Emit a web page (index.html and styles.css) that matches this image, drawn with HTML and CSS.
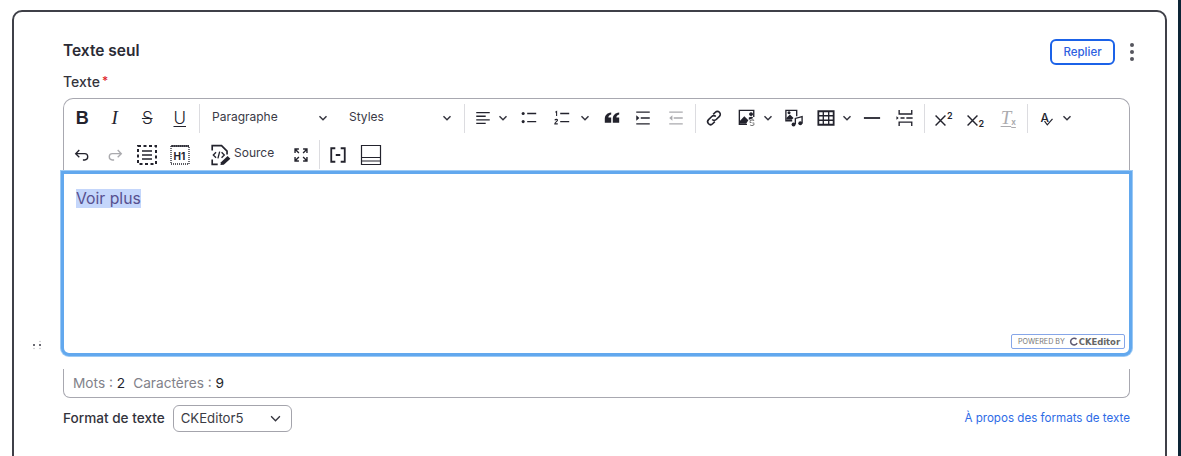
FILE: index.html
```html
<!DOCTYPE html>
<html lang="fr">
<head>
<meta charset="utf-8">
<title>Texte seul</title>
<link rel="stylesheet" href="styles.css">
</head>
<body>
<div class="page">
<main class="card">
  <span class="drag" aria-hidden="true">
    <svg width="12" height="12" viewBox="0 0 12 12"><g fill="#3a3a44"><circle cx="3" cy="6" r="1"/><circle cx="9" cy="6" r="1"/></g><g fill="#c4c4c8"><circle cx="9" cy="2.500" r=".8"/><circle cx="3" cy="9.500" r=".8"/><circle cx="9" cy="9.500" r=".8"/></g></svg>
  </span>
  <header class="head">
    <h2 class="title">Texte seul</h2>
    <div class="actions">
      <button class="collapse">Replier</button>
      <span class="kebab"><i></i><i></i><i></i></span>
    </div>
  </header>
  <label class="label">Texte<span class="req">*</span></label>
  <div class="editor">
    <div class="toolbar">
      <div class="row row1">
        <span class="btn t-b">B</span>
        <span class="btn t-i">I</span>
        <span class="btn t-s">S</span>
        <span class="btn t-u">U</span>
        <span class="sep s1"></span>
        <span class="drop d1"><span class="drop-text">Paragraphe</span><svg class="chev" viewBox="0 0 10 10"><path d="M1.500 3.200 5 6.800l3.500-3.600"/></svg></span>
        <span class="drop d2"><span class="drop-text">Styles</span><svg class="chev" viewBox="0 0 10 10"><path d="M1.500 3.200 5 6.800l3.500-3.600"/></svg></span>
        <span class="sep s2"></span>
        <span class="btn split"><svg class="ico" viewBox="0 0 20 20"><path class="ln" d="M2.500 4h15M2.500 8h10.500M2.500 12h15M2.500 16h10.500"/></svg></span>
        <span class="arrow a1"><svg class="chev" viewBox="0 0 10 10"><path d="M1.500 3.200 5 6.800l3.500-3.600"/></svg></span>
        <span class="btn"><svg class="ico" viewBox="0 0 20 20"><circle cx="3.500" cy="5" r="1.700"/><circle cx="3.500" cy="14" r="1.700"/><path class="ln" d="M8 5h10M8 14h10"/></svg></span>
        <span class="btn split"><svg class="ico" viewBox="0 0 20 20"><path class="ln thin" d="M2.700 3.500 4 2.800v5M2 12.500c.6-1.300 3-1.300 3 0 0 1-3 2.300-3 4h3.300"/><path class="ln" d="M8 5h10M8 14h10"/></svg></span>
        <span class="arrow"><svg class="chev" viewBox="0 0 10 10"><path d="M1.500 3.200 5 6.800l3.500-3.600"/></svg></span>
        <span class="btn b-quote"><svg class="ico quote" viewBox="0 0 20 20"><path d="M1 16h8v-6.500H5.500c0-2 1-3.300 3.500-4V3C3.500 3.500 1 7 1 11zM11 16h8v-6.500h-3.500c0-2 1-3.300 3.500-4V3c-5.500.5-8 4-8 8z"/></svg></span>
        <span class="btn"><svg class="ico" viewBox="0 0 20 20"><path class="ln" d="M2.500 3.500h15M7.500 10h10M2.500 16.500h15"/><path d="M2.500 7v6l3.500-3z"/></svg></span>
        <span class="btn off"><svg class="ico" viewBox="0 0 20 20"><path class="ln" d="M2.500 3.500h15M7.500 10h10M2.500 16.500h15"/><path d="M6 7v6l-3.500-3z"/></svg></span>
        <span class="sep s3"></span>
        <span class="btn"><svg class="ico link" viewBox="0 0 20 20"><path class="ln ln2" d="m9 5.500 2.700-2.700a3.600 3.600 0 0 1 5.100 5.100l-4 4a3.600 3.600 0 0 1-5.100 0M11 14.500l-2.700 2.700a3.600 3.600 0 0 1-5.100-5.100l4-4a3.600 3.600 0 0 1 5.100 0"/></svg></span>
        <span class="btn split"><svg class="ico" viewBox="0 0 20 20"><path class="ln" d="M10 17H1.500V1.500h16V9"/><path d="M1.500 16.500V14l5.500-6 4.500 4.500-2.500 4zM14.500 3.500a2.200 2.200 0 1 1-.01 0zM12 9.500c2-1.200 4-1.200 5 .5l-3 1.500-2 .5z"/><path class="ln thin gray" d="M17.800 13c-1.200-1.500-4.700-1-4.400 1.300M13.500 17.500c1.200 1.500 4.700 1 4.400-1.300M13 15h2M16 15.500h2"/></svg></span>
        <span class="arrow a2"><svg class="chev" viewBox="0 0 10 10"><path d="M1.500 3.200 5 6.800l3.500-3.600"/></svg></span>
        <span class="btn"><svg class="ico" viewBox="0 0 20 20"><path class="ln" d="M8 13H1V1.500h12V8"/><path d="M1.500 12V10l4-4 4 4-2 2zM4.500 2.500a1.700 1.700 0 1 1-.01 0z"/><path class="ln" d="M11.500 17V10.500l7.500-2V16"/><circle cx="9.500" cy="17.300" r="2.200"/><circle cx="17" cy="15.800" r="2.200"/></svg></span>
        <span class="btn split"><svg class="ico" viewBox="0 0 20 20"><path class="ln ln2" d="M1.500 2.500h17v15h-17z"/><path class="ln" d="M1.500 7.500h17M1.500 12.500h17M7 2.500v15M13 2.500v15"/></svg></span>
        <span class="arrow a3"><svg class="chev" viewBox="0 0 10 10"><path d="M1.500 3.200 5 6.800l3.500-3.600"/></svg></span>
        <span class="btn b-hr"><svg class="ico" viewBox="0 0 20 20"><path class="ln ln2" d="M1 10h18"/></svg></span>
        <span class="btn"><svg class="ico" viewBox="0 0 20 20"><path class="ln" d="M3.500 1v4.500h14V1M3.500 19v-4.500h14V19M5 10h4.500M11.500 10h7"/><path d="M.5 8v4L3 10z"/></svg></span>
        <span class="sep s4"></span>
        <span class="btn t-x"><svg class="ico" viewBox="0 0 20 20"><path class="ln x-ln" d="m1 1 18 18M19 1 1 19"/></svg><sup>2</sup></span>
        <span class="btn t-x t-sub"><svg class="ico" viewBox="0 0 20 20"><path class="ln x-ln" d="m1 1 18 18M19 1 1 19"/></svg><sub>2</sub></span>
        <span class="btn t-t off">T<small>x</small></span>
        <span class="sep s5"></span>
        <span class="btn t-a">A<svg class="tick" viewBox="0 0 12 10"><path class="ln" d="m1 4 3.500 4.500L11 1"/></svg></span>
        <span class="arrow a4"><svg class="chev" viewBox="0 0 10 10"><path d="M1.500 3.200 5 6.800l3.500-3.600"/></svg></span>
      </div>
      <div class="row row2">
        <span class="btn"><svg class="ico" viewBox="0 0 20 20"><path class="ln" d="M7 4.500 3 8.500l4 4M3 8.500h10c4.500 0 4.500 7 0 7h-2"/></svg></span>
        <span class="btn off"><svg class="ico" viewBox="0 0 20 20"><path class="ln" d="m13 4.500 4 4-4 4M17 8.500H7c-4.500 0-4.500 7 0 7h2"/></svg></span>
        <span class="btn"><svg class="ico big" viewBox="0 0 20 20"><path class="ln dash" d="M1 1h18v18H1z"/><path class="ln" d="M5 6h10M5 10h10M5 14h10"/></svg></span>
        <span class="btn"><svg class="ico big" viewBox="0 0 20 20"><path class="ln dotb" d="M1 1v18h18V1z"/><path class="ln" d="M1 1h18"/><text class="h1" x="9.500" y="14.500">H1</text></svg></span>
        <span class="source"><svg class="ico src" viewBox="0 0 20 20"><path class="ln" d="M2 6V1.500h8.500l5 5v3M2 14v4.500h5"/><path class="ln thin" d="M5.500 7.500 3 10l2.500 2.500M10.500 7.500 13 10l-2.500 2.500M8.800 7l-1.600 6"/><path d="m9.500 19 .5-2.500 6-5.500 2.500 2.300-6 5.500z"/></svg><span>Source</span></span>
        <span class="btn b-exp"><svg class="ico sm" viewBox="0 0 20 20"><path class="ln ln2" d="M1.500 7V1.500H7M13 1.500h5.500V7M1.500 13v5.500H7M18.500 13v5.500H13M2 2l5 5M18 2l-5 5M2 18l5-5M18 18l-5-5"/></svg></span>
        <span class="sep s6"></span>
        <span class="btn"><svg class="ico" viewBox="0 0 20 20"><path class="ln ln2" d="M7 2.500H2.500v15H7M13 2.500h4.500v15H13M7.500 10h5"/></svg></span>
        <span class="btn"><svg class="ico big" viewBox="0 0 20 20"><path class="ln thin" d="M.5 .5h19v19H.5zM.5 12.500h19M.5 16h19"/></svg></span>
      </div>
    </div>
    <div class="content">
      <p class="para"><span class="sel">Voir plus</span></p>
      <div class="powered">POWERED BY <svg viewBox="0 0 12 12"><path d="M10 3a4.500 4.500 0 1 0 .8 5"/></svg><b>CKEditor</b></div>
    </div>
    <div class="status">Mots : <em>2</em><span class="chars">Caractères : <em>9</em></span></div>
  </div>
  <div class="format">
    <span class="format-label">Format de texte</span>
    <span class="select">CKEditor5<svg class="chev" viewBox="0 0 10 10"><path d="M1 3 5 7l4-4"/></svg></span>
    <a class="about" href="#">À propos des formats de texte</a>
  </div>
</main>
<aside class="strip"></aside>
</div>
</body>
</html>
```

FILE: styles.css
```css
* { box-sizing: border-box; }
html, body { margin: 0; height: 100%; overflow: hidden; background: #fff; }
body { font-family: Inter, "Liberation Sans", sans-serif; color: #2f2f38; }
.page { display: flex; height: 456px; padding-left: 12px; }
.card {
  position: relative;
  width: 1155px;
  height: 470px;
  margin-top: 10px;
  margin-right: 11px;
  padding: 25px 35px 0 49px;
  border: 2px solid #3f4048;
  border-radius: 10px;
}
.strip { width: 3px; height: 456px; background: #0d2536; }
.drag { position: absolute; left: 17px; top: 327px; width: 12px; height: 12px; }
.drag svg { display: block; }
.head { display: flex; align-items: center; justify-content: space-between; height: 28px; }
.title { margin: 0; font-size: 15.500px; line-height: 26px; font-weight: 600; color: #2b2b35; }
.actions { display: flex; align-items: center; margin: 2px -5px 0 0; }
.collapse {
  width: 65px; height: 26px; padding: 0;
  font: 500 11.500px Inter, sans-serif; color: #2d5fe0;
  background: #fff; border: 2px solid #1b62e8; border-radius: 6px;
}
.kebab { display: flex; flex-direction: column; gap: 3px; margin-left: 15px; width: 5px; }
.kebab i { width: 4px; height: 4px; border-radius: 50%; background: #55565e; }
.label { display: block; margin-top: 6px; height: 27px; font-size: 14px; line-height: 20px; font-weight: 500; color: #33333c; }
.req { margin-left: 2px; color: #e0262b; font-size: 12px; vertical-align: 2px; }
.editor { width: 1067px; }
.toolbar { height: 73px; padding: 0 0 0 2px; border: 1px solid #a8a8b0; border-bottom: 0; border-radius: 10px 10px 0 0; }
.row { display: flex; align-items: center; }
.row1 { height: 37px; padding-top: 1px; }
.row2 { height: 35px; padding-top: 2px; }
.btn { display: flex; flex: none; align-items: center; justify-content: center; width: 32.500px; height: 28px; color: #23232d; }
.off { opacity: .38; }
.ico { display: block; width: 18px; height: 18px; fill: #23232d; overflow: visible; }
.ico.big { width: 20px; height: 20px; }
.ico.sm { width: 14px; height: 14px; }
.ico.src { width: 22px; height: 22px; }
.ico.quote { width: 16px; height: 16px; margin-left: 2px; }
.ico.link { width: 16px; height: 16px; }
.ln { fill: none; stroke: #23232d; stroke-width: 1.500; }
.ln2 { stroke-width: 2; }
.thin { stroke-width: 1.200; }
.gray { stroke: #777; }
.x-ln { stroke-width: 2.600; }
.dash { stroke-dasharray: 3 2.500; stroke-width: 2; }
.dotb { stroke-dasharray: 1 1; stroke-width: 1.300; }
.h1 { font: 700 10px Inter, sans-serif; fill: #23232d; text-anchor: middle; }
.sep { flex: none; width: 1px; height: 29px; margin: 0 2px; background: #dcdce0; }
.s1 { margin-left: 3px; }
.s2, .s3, .s4, .s5 { margin: 0 2.500px; }
.t-b { font: 700 18px "Liberation Sans", sans-serif; }
.t-i { font: italic 400 19px "Liberation Serif", serif; }
.t-s { font: 300 17px Inter, sans-serif; text-decoration: line-through; text-decoration-thickness: 1.300px; }
.t-u { font: 300 17px Inter, sans-serif; text-decoration: underline; text-decoration-thickness: 1.300px; text-underline-offset: 2px; }
.drop { display: flex; flex: none; align-items: center; justify-content: space-between; height: 28px; font-size: 12px; color: #3a3a46; }
.drop-text { margin-top: -3px; }
.d1 { width: 135px; padding: 0 9.500px 0 10px; }
.d2 { width: 124px; padding: 0 9.500px 0 12px; }
.chev { display: block; flex: none; width: 10px; height: 10px; fill: none; stroke: #33333d; stroke-width: 1.400; }
.split { width: 32px; }
.arrow { display: flex; flex: none; align-items: center; justify-content: center; width: 14px; }
.a1 { margin: 0 3px 0 -3px; }
.a2 { width: 16px; margin: 0 2px 0 -3px; }
.a3 { width: 16px; margin-left: -3px; }
.a4 { width: 14px; margin-left: -3px; }
.b-quote { margin-left: 3px; }
.b-hr { margin-left: 1px; }
.t-x { position: relative; }
.t-x sup, .t-x sub { font-size: 9px; font-weight: 600; line-height: 1; color: #23232d; position: absolute; }
.t-x .ico { width: 11px; height: 11px; margin: 4px 6px 0 0; }
.t-x sup { right: 7px; top: 7px; }
.t-x sub { right: 8px; bottom: 4px; }
.t-t { font: italic 400 19px "Liberation Serif", serif; text-decoration: underline; text-decoration-thickness: 1px; text-underline-offset: 2px; }
.t-t small { font: 700 8px Inter, sans-serif; margin-top: 8px; }
.t-a { position: relative; font: 500 12px Inter, sans-serif; align-items: flex-start; padding-right: 4px; padding-top: 6px; }
.tick { position: absolute; left: 12px; top: 14px; width: 11px; height: 8px; }
.source { display: flex; flex: none; align-items: center; width: 90px; padding-left: 14px; gap: 2px; font-size: 12px; color: #3a3a46; margin-top: -2px; }
.source .ico { margin-top: 2px; }
.source span { margin-top: -3px; }
.b-exp { margin-left: -1px; width: 32px; }
.content {
  position: relative;
  width: 1071px; height: 185px;
  margin: 0 -2px;
  padding: 15px 12px 0;
  border: 3px solid #62a8ee;
  border-radius: 0 0 8px 8px;
  background: #fff;
  box-shadow: 0 0 0 1px #9ccaf5;
}
.para { margin: 0; font-size: 15.750px; line-height: 20px; color: #57508f; }
.sel { display: inline-block; background: #c4d6fb; line-height: 19px; }
.powered {
  position: absolute; right: 4px; bottom: 4px;
  display: flex; align-items: center;
  width: 114px; height: 15px; padding-left: 6px;
  font-size: 7.200px; color: #777; letter-spacing: -.05px; white-space: pre;
  border: 1px solid #86a6e8; border-radius: 2px; background: #fff;
}
.powered svg { width: 9px; height: 9px; margin-left: 2px; fill: none; stroke: #5f5a72; stroke-width: 2; }
.powered b { margin-left: 1px; font: 700 8.500px "DejaVu Sans", sans-serif; color: #666; }
.status {
  height: 29px; margin-top: 13px; padding: 5px 0 0 9px;
  font-size: 13.700px; line-height: 18px; color: #82828a;
  border: 1px solid #a8a8b0; border-top: 0; border-radius: 0 0 7px 7px;
}
.status em { font-style: normal; color: #24242c; }
.chars { margin-left: 8px; }
.format { display: flex; align-items: center; width: 1067px; height: 28px; margin-top: 6px; }
.format-label { font-size: 13.600px; font-weight: 500; color: #33333c; }
.select {
  display: flex; align-items: center; justify-content: space-between;
  width: 119px; height: 27px; margin-left: 8px; padding: 0 10px 0 7px;
  font-size: 13.200px; color: #3b3b45;
  border: 1px solid #a4a4ac; border-radius: 6px;
}
.select .chev { width: 11px; height: 11px; stroke-width: 1.200; }
.about { margin-left: auto; font-size: 11.600px; color: #2e6be6; text-decoration: none; }
```
